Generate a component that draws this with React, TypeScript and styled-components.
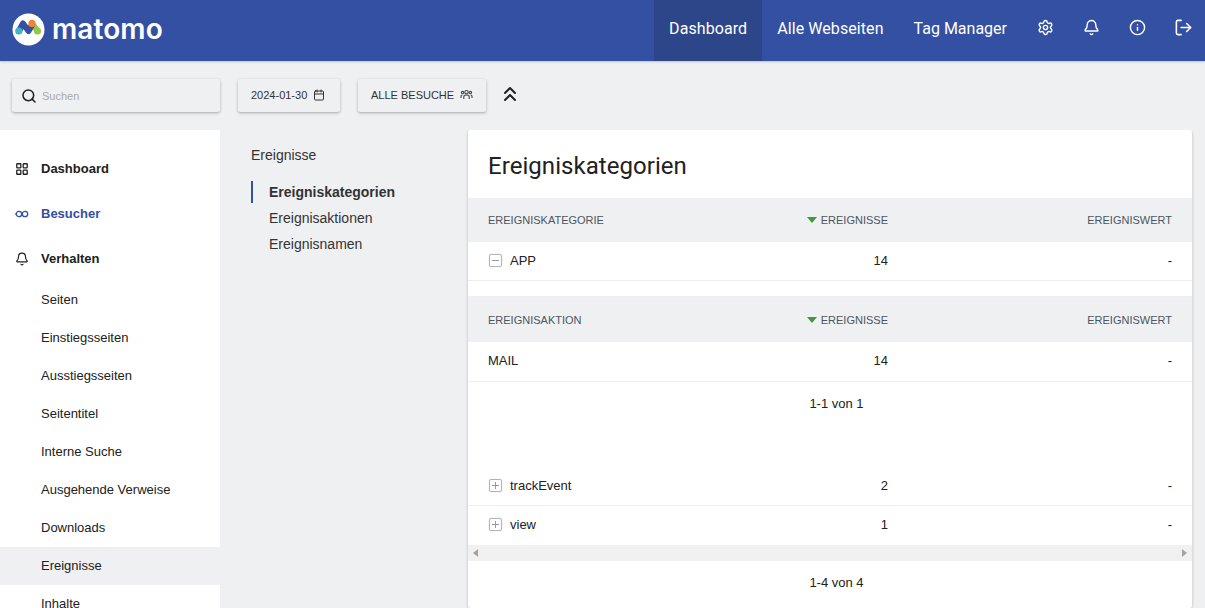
import React from 'react';
import styled, { createGlobalStyle } from 'styled-components';
import { Settings, Bell, Info, LogOut, Search, Calendar, ChevronsUp, LayoutGrid } from 'lucide-react';

const GlobalStyle = createGlobalStyle`
  html, body {
    margin: 0;
    height: 608px;
    overflow: hidden;
    background: #eff0f1;
    font-family: "Liberation Sans", Arial, sans-serif;
    color: #212121;
  }
  * { box-sizing: border-box; }
`;

const Header = styled.header`
  height: 61px;
  background: #3450a3;
  display: flex;
  align-items: stretch;
  box-shadow: 0 1px 2px rgba(0, 0, 0, 0.2);
`;

const Brand = styled.div`
  display: flex;
  align-items: center;
  gap: 7px;
  padding: 0 0 3px 12px;
  margin-right: auto;
`;

const Wordmark = styled.span`
  font-family: Inter, sans-serif;
  font-weight: 600;
  font-size: 28px;
  letter-spacing: 0.1px;
  color: #fff;
  line-height: 1;
`;

const NavLink = styled.a<{ $active?: boolean; $plain?: boolean }>`
  display: flex;
  align-items: center;
  padding: 0 15px 4px;
  font-family: Roboto, sans-serif;
  font-size: 16px;
  letter-spacing: ${p => (p.$plain ? '0' : '0.08px')};
  color: #fff;
  background: ${p => (p.$active ? '#2d4689' : 'transparent')};
`;

const NavIcon = styled.span`
  width: 46px;
  display: flex;
  align-items: center;
  justify-content: center;
  color: #fff;
  padding-bottom: 7px;
`;

const NavIcons = styled.div`
  display: flex;
  align-items: stretch;
  margin-right: -1px;
`;

const Toolbar = styled.div`
  height: 69px;
  padding: 18px 12px 0;
  display: flex;
  align-items: flex-start;
`;

const Control = styled.div`
  height: 33px;
  display: flex;
  align-items: center;
  background: #eff0f1;
  border-radius: 2px;
  box-shadow: 0 1px 3px rgba(0, 0, 0, 0.3);
  font-size: 11px;
  color: #333;
`;

const SearchBox = styled(Control)`
  width: 208px;
  padding-left: 9px;
  gap: 5px;
  margin-right: 18px;
  color: #a9a9a9;
  svg { color: #212121; }
`;

const DateBox = styled(Control)`
  width: 102px;
  padding: 0 0 1px 13px;
  gap: 6px;
  margin-right: 18px;
  svg { color: #333; }
`;

const SegmentBox = styled(Control)`
  width: 128px;
  padding: 0 0 1px 13px;
  gap: 6px;
  margin-right: 12px;
  svg { color: #444; }
`;

const Collapse = styled.span`
  height: 33px;
  display: flex;
  align-items: center;
  padding-bottom: 3px;
  color: #212121;
`;

const Main = styled.div`
  display: flex;
  align-items: stretch;
  height: 478px;
  overflow: hidden;
`;

const Sidebar = styled.nav`
  width: 220px;
  flex: none;
  background: #fff;
  padding-top: 16px;
`;

const SideHead = styled.div<{ $blue?: boolean }>`
  height: 45px;
  display: flex;
  align-items: center;
  padding-left: 15px;
  gap: 12px;
  font-size: 13px;
  font-weight: 700;
  color: ${p => (p.$blue ? '#3450a3' : '#212121')};
`;

const SideItem = styled.div<{ $active?: boolean }>`
  height: 38px;
  display: flex;
  align-items: center;
  padding: 0 0 2px 41px;
  font-size: 13px;
  color: #212121;
  background: ${p => (p.$active ? '#eff0f1' : 'transparent')};
`;

const SubMenu = styled.div`
  width: 248px;
  flex: none;
  padding: 17px 0 0 31px;
`;

const SubTitle = styled.div`
  font-size: 14px;
  color: #333;
  height: 17px;
  line-height: 17px;
  margin-bottom: 17px;
`;

const SubLink = styled.div<{ $active?: boolean }>`
  height: ${p => (p.$active ? '22px' : '26px')};
  line-height: ${p => (p.$active ? '22px' : '26px')};
  padding-left: 16px;
  margin-bottom: ${p => (p.$active ? '2px' : '0')};
  font-size: 14px;
  font-weight: ${p => (p.$active ? 700 : 400)};
  color: #333;
  border-left: 2px solid ${p => (p.$active ? '#3450a3' : 'transparent')};
`;

const Card = styled.section`
  width: 724px;
  flex: none;
  background: #fff;
  border-radius: 2px;
  box-shadow: 0 1px 3px rgba(0, 0, 0, 0.25);
`;

const Title = styled.h2`
  margin: 0;
  height: 68px;
  padding: 21px 20px 0;
  font-family: Roboto, sans-serif;
  font-weight: 400;
  font-size: 24px;
  letter-spacing: 0.05px;
  line-height: 30px;
  color: #212121;
`;

const Row = styled.div<{ $h?: number; $head?: boolean; $noLine?: boolean; $lift?: boolean }>`
  display: grid;
  grid-template-columns: 1fr 170px 284px;
  align-items: center;
  padding: 0 20px ${p => (p.$lift ? '2px' : '0')};
  height: ${p => p.$h ?? 39}px;
  background: ${p => (p.$head ? '#eff0f1' : '#fff')};
  border-bottom: ${p => (p.$head || p.$noLine ? '0' : '1px solid #eee')};
  font-size: ${p => (p.$head ? '11px' : '13px')};
  color: ${p => (p.$head ? '#4b5563' : '#212121')};
`;

const Label = styled.div`
  display: flex;
  align-items: center;
  gap: 8px;
  padding-left: 1px;
`;

const Num = styled.div`
  text-align: right;
`;

const SortNum = styled(Num)`
  display: flex;
  align-items: center;
  justify-content: flex-end;
  gap: 4px;
`;

const SortArrow = styled.i`
  width: 0;
  height: 0;
  border-left: 5px solid transparent;
  border-right: 5px solid transparent;
  border-top: 6px solid #43963f;
`;

const Toggle = styled.span<{ $minus?: boolean }>`
  width: 13px;
  height: 13px;
  border: 1px solid #b4b4b4;
  border-radius: 2px;
  box-shadow: 0 0 1px rgba(0, 0, 0, 0.25);
  position: relative;
  &::before {
    content: '';
    position: absolute;
    left: 2px;
    right: 2px;
    top: 5px;
    height: 1px;
    background: #999;
  }
  &::after {
    content: '';
    display: ${p => (p.$minus ? 'none' : 'block')};
    position: absolute;
    top: 2px;
    bottom: 2px;
    left: 5px;
    width: 1px;
    background: #999;
  }
`;

const Spacer = styled.div<{ $h: number; $line?: boolean }>`
  height: ${p => p.$h}px;
  border-bottom: ${p => (p.$line ? '1px solid #eee' : '0')};
`;

const Pager = styled.div<{ $h: number; $top: number }>`
  height: ${p => p.$h}px;
  padding: ${p => p.$top}px 0 0 13px;
  line-height: 15px;
  text-align: center;
  font-size: 13px;
  color: #212121;
`;

const ScrollBar = styled.div`
  height: 16px;
  background: #f1f1f1;
  display: flex;
  align-items: center;
  justify-content: space-between;
  padding: 0 5px;
`;

const ScrollArrow = styled.i<{ $right?: boolean }>`
  width: 0;
  height: 0;
  border-top: 4px solid transparent;
  border-bottom: 4px solid transparent;
  ${p => (p.$right ? 'border-left: 5px solid #a3a3a3;' : 'border-right: 5px solid #a3a3a3;')}
`;

const Logo = () => (
  <svg width="33" height="33" viewBox="0 0 33 33">
    <circle cx="16.5" cy="16.5" r="16" fill="#fff" />
    <path d="M20 10.5 L25.5 18" fill="none" stroke="#95c748" strokeWidth="6" strokeLinecap="round" />
    <path d="M7 18 L11 10.5 L16.5 18 L20 12" fill="none" stroke="#3450a3" strokeWidth="6" strokeLinecap="round" strokeLinejoin="round" />
    <circle cx="6.8" cy="18" r="3.6" fill="#3fb5c5" />
    <circle cx="25.5" cy="18" r="3.6" fill="#95c748" />
    <circle cx="20" cy="10.4" r="3.6" fill="#f38334" />
  </svg>
);

const GroupIcon = () => (
  <svg width="13" height="12" viewBox="0 0 13 12" fill="none" stroke="currentColor" strokeWidth="1.1">
    <circle cx="6.5" cy="3.2" r="1.7" />
    <circle cx="2.6" cy="3.6" r="1.2" />
    <circle cx="10.4" cy="3.6" r="1.2" />
    <path d="M3.8 10V7.8C3.8 6.6 5 6 6.5 6S9.2 6.6 9.2 7.8V10" />
    <path d="M1 9V7.2C1 6.4 1.6 6 2.4 6" />
    <path d="M12 9V7.2C12 6.4 11.4 6 10.6 6" />
  </svg>
);

const VisitorIcon = () => (
  <svg width="14" height="14" viewBox="0 0 14 14" fill="none" stroke="currentColor" strokeWidth="1.3">
    <circle cx="4" cy="7" r="2.7" />
    <circle cx="10" cy="7" r="2.7" />
    <path d="M1.3 6.6 L0.4 7.4" />
  </svg>
);

const HeadRow = ({ title, h }: { title: string; h: number }) => (
  <Row $h={h} $head>
    <div>{title}</div>
    <SortNum><SortArrow />EREIGNISSE</SortNum>
    <Num>EREIGNISWERT</Num>
  </Row>
);

const pages = ['Seiten', 'Einstiegsseiten', 'Ausstiegsseiten', 'Seitentitel', 'Interne Suche', 'Ausgehende Verweise', 'Downloads', 'Ereignisse', 'Inhalte'];

export default function App() {
  return (
    <>
      <GlobalStyle />
      <Header>
        <Brand>
          <Logo />
          <Wordmark>matomo</Wordmark>
        </Brand>
        <NavLink $active>Dashboard</NavLink>
        <NavLink>Alle Webseiten</NavLink>
        <NavLink $plain>Tag Manager</NavLink>
        <NavIcons>
          <NavIcon><Settings size={17} /></NavIcon>
          <NavIcon><Bell size={17} /></NavIcon>
          <NavIcon><Info size={17} /></NavIcon>
          <NavIcon><LogOut size={19} /></NavIcon>
        </NavIcons>
      </Header>
      <Toolbar>
        <SearchBox><Search size={16} strokeWidth={2.3} />Suchen</SearchBox>
        <DateBox>2024-01-30<Calendar size={12} /></DateBox>
        <SegmentBox>ALLE BESUCHE<GroupIcon /></SegmentBox>
        <Collapse><ChevronsUp size={24} strokeWidth={2} /></Collapse>
      </Toolbar>
      <Main>
        <Sidebar>
          <SideHead><LayoutGrid size={14} strokeWidth={2.2} />Dashboard</SideHead>
          <SideHead $blue><VisitorIcon />Besucher</SideHead>
          <SideHead><Bell size={14} />Verhalten</SideHead>
          {pages.map(p => (
            <SideItem key={p} $active={p === 'Ereignisse'}>{p}</SideItem>
          ))}
        </Sidebar>
        <SubMenu>
          <SubTitle>Ereignisse</SubTitle>
          <SubLink $active>Ereigniskategorien</SubLink>
          <SubLink>Ereignisaktionen</SubLink>
          <SubLink>Ereignisnamen</SubLink>
        </SubMenu>
        <Card>
          <Title>Ereigniskategorien</Title>
          <HeadRow title="EREIGNISKATEGORIE" h={44} />
          <Row $lift>
            <Label><Toggle $minus />APP</Label>
            <Num>14</Num>
            <Num>-</Num>
          </Row>
          <Spacer $h={16} $line />
          <HeadRow title="EREIGNISAKTION" h={45} />
          <Row $h={40} $lift>
            <div>MAIL</div>
            <Num>14</Num>
            <Num>-</Num>
          </Row>
          <Pager $h={84} $top={14}>1-1 von 1</Pager>
          <Row $h={40}>
            <Label><Toggle />trackEvent</Label>
            <Num>2</Num>
            <Num>-</Num>
          </Row>
          <Row $noLine $lift>
            <Label><Toggle />view</Label>
            <Num>1</Num>
            <Num>-</Num>
          </Row>
          <ScrollBar><ScrollArrow /><ScrollArrow $right /></ScrollBar>
          <Pager $h={47} $top={14}>1-4 von 4</Pager>
        </Card>
      </Main>
    </>
  );
}
